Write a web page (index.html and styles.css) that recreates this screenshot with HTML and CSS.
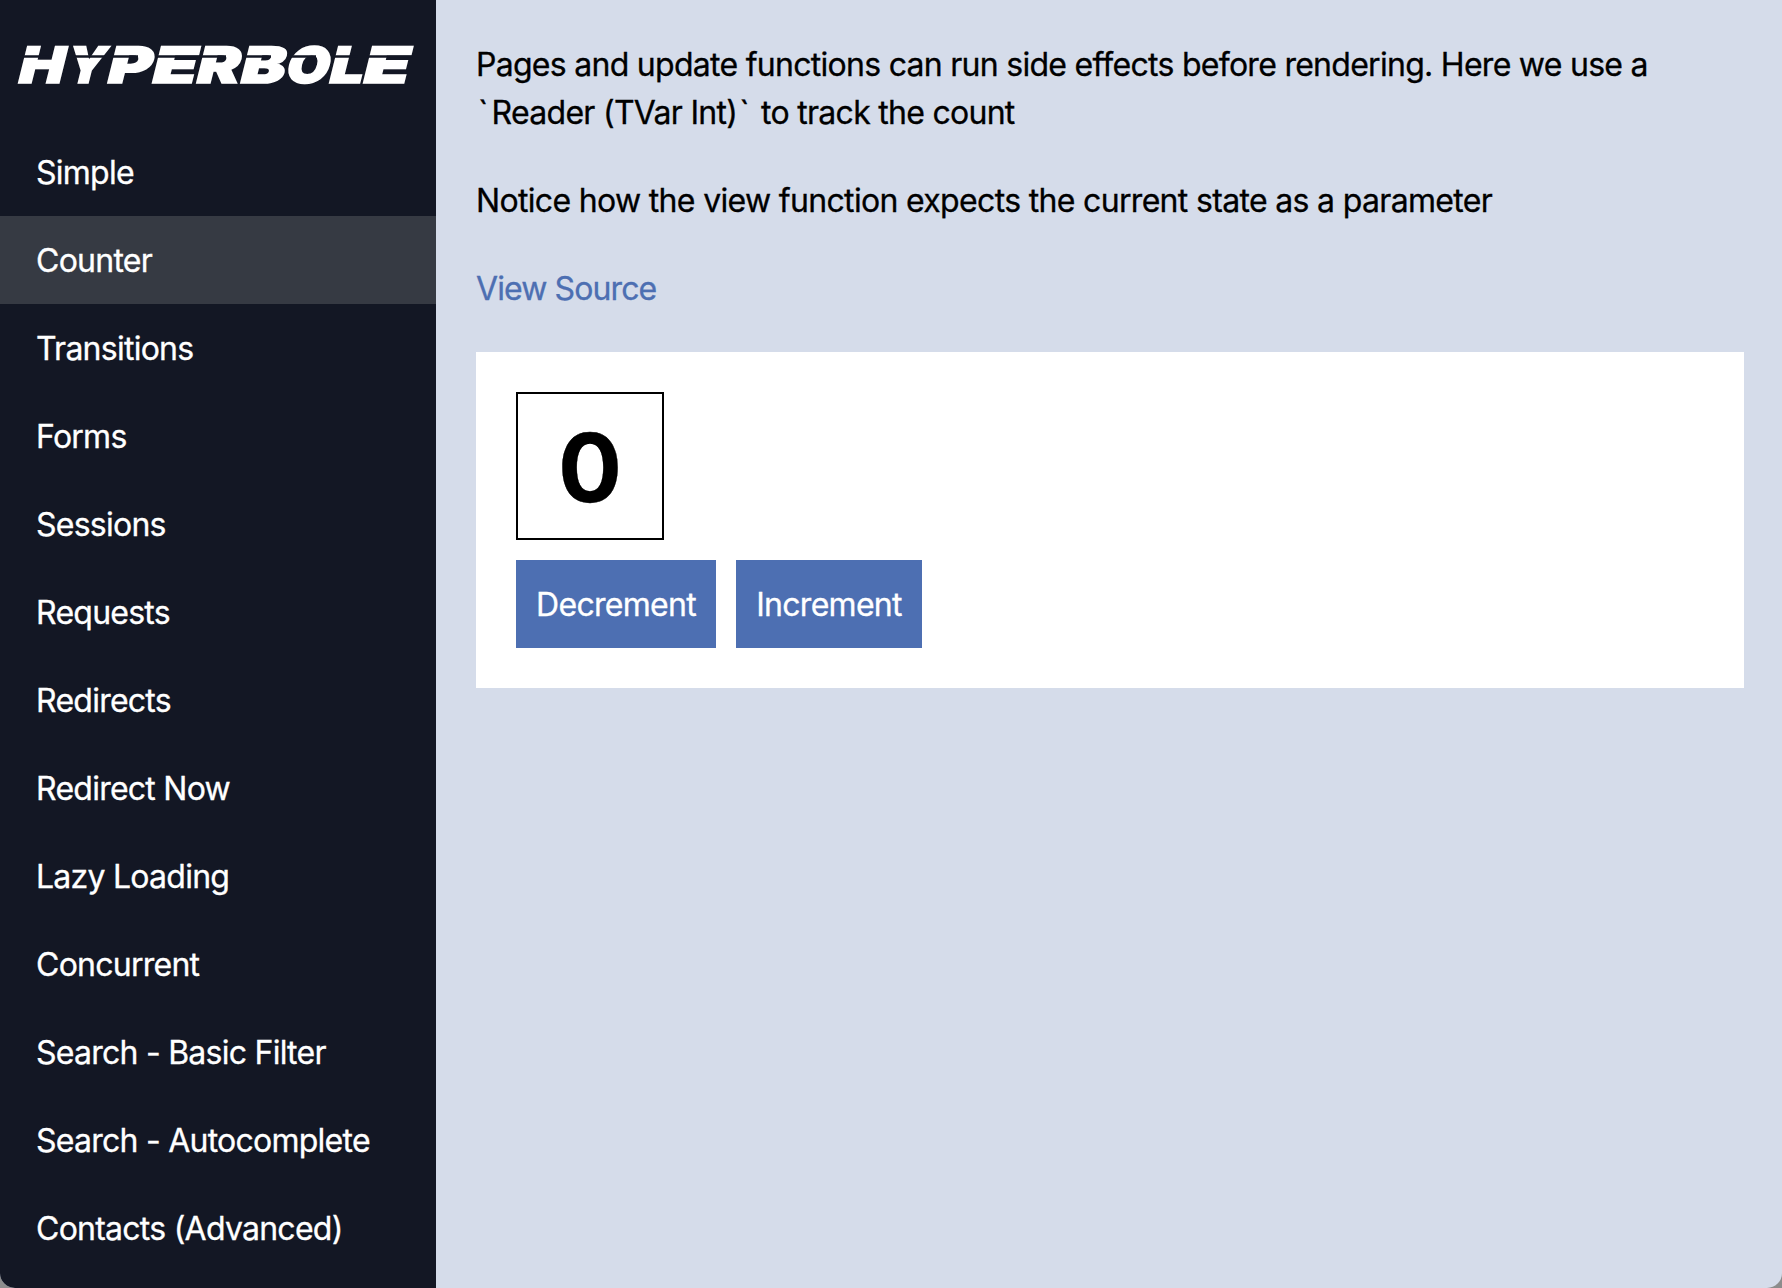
FILE: index.html
```html
<!DOCTYPE html>
<html lang="en">
<head>
<meta charset="utf-8">
<title>Hyperbole Examples</title>
<link rel="stylesheet" href="styles.css">
</head>
<body>
<div class="app">
  <aside class="sidebar">
    <svg class="logo" width="436" height="128" viewBox="0 0 436 128" role="img" aria-label="Hyperbole">
      <g transform="translate(0 82.5) skewX(-14)">
        <text class="logo-text"><tspan x="16" textLength="45.5" lengthAdjust="spacingAndGlyphs">H</tspan><tspan x="64" textLength="38" lengthAdjust="spacingAndGlyphs">Y</tspan><tspan x="105" textLength="44" lengthAdjust="spacingAndGlyphs">P</tspan><tspan x="149.5" textLength="44.5" lengthAdjust="spacingAndGlyphs">E</tspan><tspan x="194" textLength="43" lengthAdjust="spacingAndGlyphs">R</tspan><tspan x="238" textLength="44.5" lengthAdjust="spacingAndGlyphs">B</tspan><tspan x="283.5" textLength="43" lengthAdjust="spacingAndGlyphs">O</tspan><tspan x="327" textLength="34" lengthAdjust="spacingAndGlyphs">L</tspan><tspan x="360.5" textLength="46" lengthAdjust="spacingAndGlyphs">E</tspan></text>
      </g>
      <path class="logo-slit" d="M22 56.5H49M72 56.5H106M112 56.5H138M156 56.5H202M201 56.5H226M245 56.5H271M290 56.5H316M334 56.5H358M367 56.5H413"/>
    </svg>
    <nav class="nav">
      <a class="nav-item">Simple</a>
      <a class="nav-item active">Counter</a>
      <a class="nav-item">Transitions</a>
      <a class="nav-item">Forms</a>
      <a class="nav-item">Sessions</a>
      <a class="nav-item">Requests</a>
      <a class="nav-item">Redirects</a>
      <a class="nav-item">Redirect Now</a>
      <a class="nav-item">Lazy Loading</a>
      <a class="nav-item">Concurrent</a>
      <a class="nav-item">Search - Basic Filter</a>
      <a class="nav-item">Search - Autocomplete</a>
      <a class="nav-item">Contacts (Advanced)</a>
    </nav>
  </aside>
  <main class="content">
    <p class="intro">Pages and update functions can run side effects before rendering. Here we use a<br><span class="tick">`</span>Reader (TVar Int)<span class="tick">`</span> to track the count</p>
    <p class="note">Notice how the view function expects the current state as a parameter</p>
    <a class="source">View Source</a>
    <section class="card">
      <div class="count">0</div>
      <div class="actions">
        <button class="btn decrement">Decrement</button>
        <button class="btn increment">Increment</button>
      </div>
    </section>
  </main>
</div>
</body>
</html>
```

FILE: styles.css
```css
* { box-sizing: border-box; }
html { background: #8c8c8c; }
body {
  margin: 0;
  font-family: Inter, "Liberation Sans", sans-serif;
  font-size: 32px;
  font-weight: 400;
  line-height: 48px;
  letter-spacing: -0.72px;
  -webkit-text-stroke-width: 0.3px;
  color: #000;
}
.app {
  display: flex;
  height: 1288px;
  overflow: hidden;
  border-radius: 0 0 15px 15px;
  background: #d5dcea;
}
.sidebar { width: 436px; flex: none; background: #131724; color: #fff; }
.logo { display: block; }
.logo-text {
  font-family: Inter, sans-serif;
  font-size: 50px;
  font-weight: 900;
  letter-spacing: 0;
  fill: #fff;
  stroke: #fff;
  stroke-width: 1.6px;
}
.logo-slit { fill: none; stroke: #131724; stroke-width: 2.6px; }
.nav { display: flex; flex-direction: column; letter-spacing: -0.75px; }
.nav-item { height: 88px; padding: 21px 36px 19px; white-space: nowrap; }
.nav-item.active { background: #363a43; }
.content {
  flex: 1;
  display: flex;
  flex-direction: column;
  gap: 40px;
  padding: 41px 38px 40px 40px;
}
p { margin: 0; white-space: nowrap; }
.note { letter-spacing: -0.67px; }
.tick { padding: 0 4px 0 2px; }
.source { color: #4d6fb2; letter-spacing: -0.9px; }
.card {
  display: flex;
  flex-direction: column;
  align-items: flex-start;
  gap: 20px;
  margin-top: -1px;
  padding: 40px;
  background: #fff;
}
.count {
  width: 148px;
  height: 148px;
  border: 2px solid #000;
  font-size: 95px;
  font-weight: 700;
  line-height: 148px;
  text-align: center;
  letter-spacing: 0;
}
.actions { display: flex; gap: 20px; }
.btn {
  height: 88px;
  padding: 2px 0 0;
  border: 0;
  background: #4d6fb2;
  color: #fff;
  font: inherit;
  letter-spacing: inherit;
}
.decrement { width: 200px; }
.increment { width: 186px; }
```
